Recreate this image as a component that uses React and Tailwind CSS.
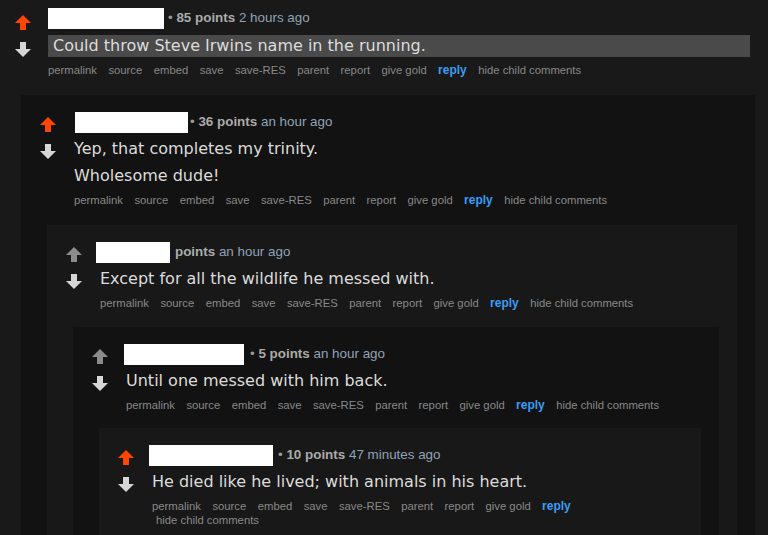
const ORANGE = '#ff4500';

function UpArrow({ on }) {
  return (
    <svg width="16" height="15" viewBox="0 0 16 15" className="block">
      <path d="M8 0 L16 8 L11 8 L11 15 L5 15 L5 8 L0 8 Z" fill={on ? ORANGE : '#8c8c8c'} />
    </svg>
  );
}

function DownArrow() {
  return (
    <svg width="16" height="15" viewBox="0 0 16 15" className="block">
      <path d="M5 0 L11 0 L11 7 L16 7 L8 15 L0 7 L5 7 Z" fill="#d6d6d6" />
    </svg>
  );
}

const BUTTONS = ['permalink', 'source', 'embed', 'save', 'save-RES', 'parent', 'report', 'give gold'];

function Buttons({ wrap }) {
  return (
    <div className="mt-[6px] flex flex-wrap items-center gap-x-[11.4px] text-[11.3px] leading-[15px] text-[#888]" style={{ fontFamily: '"Liberation Sans", Arial, sans-serif' }}>
      {BUTTONS.map(b => <span key={b}>{b}</span>)}
      <span className="text-[12px] font-bold text-[#3a9df5]">reply</span>
      {wrap && <div className="basis-full h-0" />}
      <span className={wrap ? 'pl-1 leading-[13px]' : ''}>hide child comments</span>
    </div>
  );
}

function Tagline({ nameW, nameDx, gap, points, time }) {
  return (
    <div className="flex h-[21px] items-center text-[13.4px] whitespace-nowrap" style={{ fontFamily: '"Liberation Sans", Arial, sans-serif' }}>
      <div className="h-[21px] bg-white shrink-0" style={{ width: nameW, marginLeft: nameDx }} />
      <span style={{ marginLeft: gap }} className="text-[#9a9a9a]">
        {points !== null && <span>• </span>}
        <span className="font-bold text-[#ababab]">{points !== null ? `${points} points` : 'points'}</span>{' '}
        <span className="text-[#8fa2b6]">{time}</span>
      </span>
    </div>
  );
}

function Entry({ top, up, tag, body, wrap }) {
  return (
    <div className="flex">
      <div className={top ? 'w-[48px] shrink-0 pl-[15px] pt-[7px]' : 'w-[53px] shrink-0 pl-[19px] pt-[5px]'}>
        <UpArrow on={up} />
        <div className="mt-[12px]"><DownArrow /></div>
      </div>
      <div className="flex-1 pr-[18px]">
        <Tagline {...tag} />
        <div className="text-[16px] leading-[22px] text-[#dcdcdc]" style={{ fontFamily: '"DejaVu Sans", Verdana, sans-serif' }}>
          {body.map((p, i) => (
            <p key={i} className={top ? 'mt-[6px] bg-[#4a4a4a] pl-[5px]' : 'mt-[5px]'}>{p}</p>
          ))}
        </div>
        <Buttons wrap={wrap} />
      </div>
    </div>
  );
}

const MARGINS = {
  1: 'ml-[21px] mr-[13px] mt-[17px]',
  2: 'ml-[26px] mr-[18px] mt-[17px]',
  3: 'ml-[26px] mr-[18px] mt-[16px]',
  4: 'ml-[26px] mr-[18px] mt-[15px] pb-[40px]',
};

function Box({ level, children }) {
  return (
    <div className={`${MARGINS[level]} pt-[17px] ${level % 2 ? 'bg-[#121212]' : 'bg-[#181818]'}`}>
      {children}
    </div>
  );
}

export default function App() {
  return (
    <div className="h-screen overflow-hidden bg-[#191919] pt-[8px]">
      <Entry top up tag={{ nameW: 116, nameDx: 0, gap: 4, points: 85, time: '2 hours ago' }}
        body={['Could throw Steve Irwins name in the running.']} />
      <Box level={1}>
        <Entry up tag={{ nameW: 113, nameDx: 1, gap: 2, points: 36, time: 'an hour ago' }}
          body={['Yep, that completes my trinity.', 'Wholesome dude!']} />
        <Box level={2}>
          <Entry tag={{ nameW: 74, nameDx: -4, gap: 5, points: null, time: 'an hour ago' }}
            body={['Except for all the wildlife he messed with.']} />
          <Box level={3}>
            <Entry tag={{ nameW: 120, nameDx: -2, gap: 6, points: 5, time: 'an hour ago' }}
              body={['Until one messed with him back.']} />
            <Box level={4}>
              <Entry up wrap tag={{ nameW: 124, nameDx: -3, gap: 5, points: 10, time: '47 minutes ago' }}
                body={['He died like he lived; with animals in his heart.']} />
            </Box>
          </Box>
        </Box>
      </Box>
    </div>
  );
}
